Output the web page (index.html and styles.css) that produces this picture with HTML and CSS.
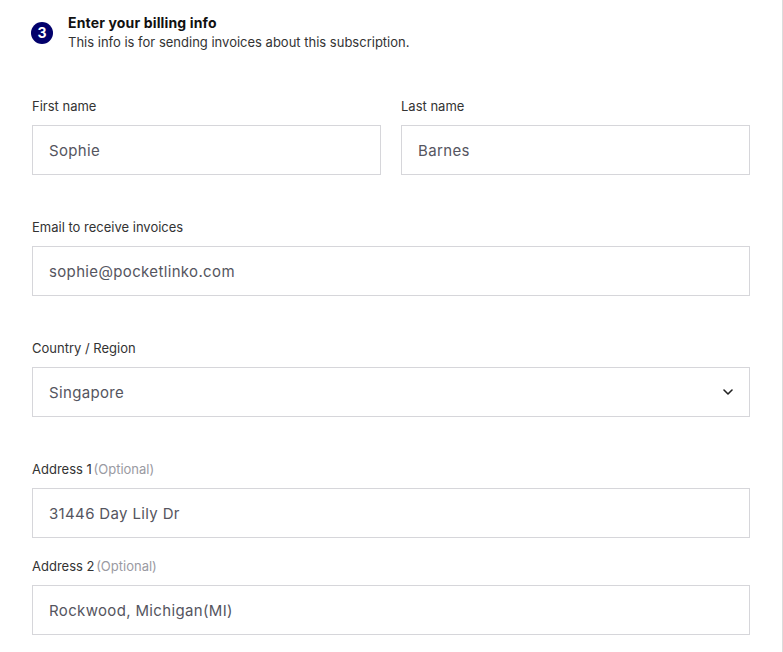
FILE: index.html
```html
<!DOCTYPE html>
<html lang="en">
<head>
<meta charset="utf-8">
<title>Billing info</title>
<link rel="stylesheet" href="styles.css">
</head>
<body>
<div class="page">
  <div class="step">
    <div class="step-num">3</div>
    <div class="step-text">
      <div class="step-title">Enter your billing info</div>
      <div class="step-sub">This info is for sending invoices about this subscription.</div>
    </div>
  </div>

  <div class="form">
    <div class="row two">
      <div class="field">
        <div class="label">First name</div>
        <div class="input">Sophie</div>
      </div>
      <div class="field">
        <div class="label">Last name</div>
        <div class="input">Barnes</div>
      </div>
    </div>

    <div class="row">
      <div class="field">
        <div class="label">Email to receive invoices</div>
        <div class="input">sophie@pocketlinko.com</div>
      </div>
    </div>

    <div class="row">
      <div class="field">
        <div class="label">Country / Region</div>
        <div class="input select">
          <span>Singapore</span>
          <svg class="chev" width="10" height="6" viewBox="0 0 10 6"><path d="M1 1 L5 5 L9 1" fill="none" stroke="#222" stroke-width="1.6" stroke-linecap="round" stroke-linejoin="round"/></svg>
        </div>
      </div>
    </div>

    <div class="row tight">
      <div class="field">
        <div class="label">Address 1 <span class="opt">(Optional)</span></div>
        <div class="input">31446 Day Lily Dr</div>
      </div>
    </div>

    <div class="row">
      <div class="field">
        <div class="label">Address 2 <span class="opt">(Optional)</span></div>
        <div class="input">Rockwood, Michigan(MI)</div>
      </div>
    </div>
  </div>
</div>
</body>
</html>
```

FILE: styles.css
```css
html, body {
  margin: 0;
  padding: 0;
  background: #fff;
}
body {
  font-family: Inter, "Noto Sans", "DejaVu Sans", sans-serif;
  color: #222;
}
.page {
  width: 782px;
  height: 652px;
  border-right: 1px solid #dcdcdc;
  box-sizing: content-box;
  padding: 0;
  overflow: hidden;
}
.step {
  display: flex;
  gap: 15px;
  padding: 14px 0 0 31px;
}
.step-num {
  width: 22px;
  height: 22px;
  border-radius: 50%;
  background: #02006b;
  color: #fff;
  font-weight: 700;
  font-size: 14px;
  line-height: 22px;
  text-align: center;
  margin-top: 8px;
  flex: none;
}
.step-title {
  font-size: 14px;
  font-weight: 700;
  color: #111;
  line-height: 18px;
  letter-spacing: 0.15px;
}
.step-sub {
  font-size: 13px;
  color: #333;
  line-height: 18px;
  margin-top: 1px;
}
.form {
  display: flex;
  flex-direction: column;
  gap: 43px;
  padding: 46px 0 0 32px;
  width: 718px;
}
.row.tight {
  margin-bottom: -24px;
}
.row.two {
  display: grid;
  grid-template-columns: 1fr 1fr;
  gap: 20px;
}
.field {
  display: flex;
  flex-direction: column;
  gap: 10px;
}
.label {
  font-size: 13px;
  line-height: 18px;
  color: #333;
}
.opt {
  color: #9a9aa2;
  margin-left: -2px;
}
.input {
  height: 50px;
  box-sizing: border-box;
  border: 1px solid #d6d6da;
  padding: 0 16px;
  display: flex;
  align-items: center;
  font-size: 15px;
  letter-spacing: 0.35px;
  color: #555560;
}
.select {
  justify-content: space-between;
}
.chev {
  margin-right: 0;
}
```
